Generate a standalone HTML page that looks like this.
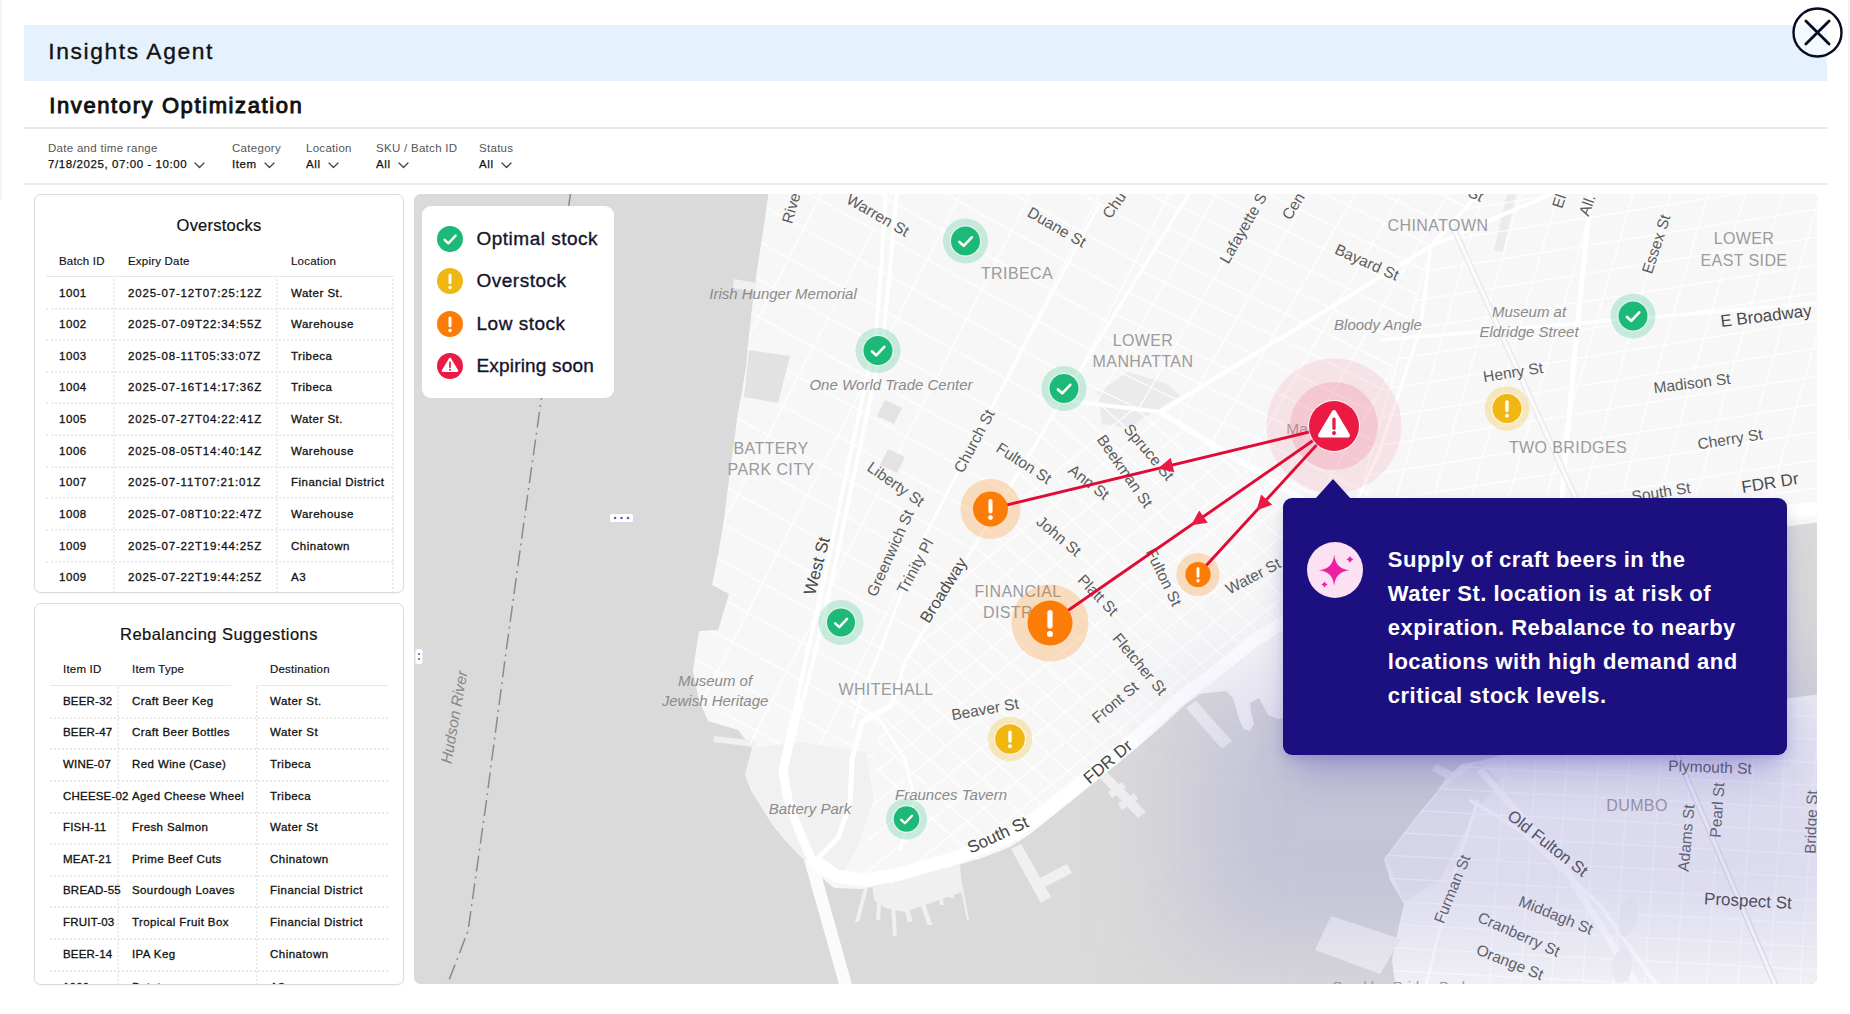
<!DOCTYPE html>
<html lang="en"><head><meta charset="utf-8"><title>Insights Agent - Inventory Optimization</title>
<style>
*{box-sizing:border-box;margin:0;padding:0}
html,body{width:1850px;height:1014px;overflow:hidden;background:#fff}
body{position:relative;font-family:"Liberation Sans","DejaVu Sans",sans-serif;color:#111}
.abs{position:absolute}
.band{left:24px;top:25px;width:1803px;height:55.8px;background:#e5f2fe}
.h1{left:48.3px;top:35.8px;font-size:22.8px;line-height:30px;color:#111;white-space:nowrap;letter-spacing:1.6px;-webkit-text-stroke:.35px #111}
.h2{left:49.3px;top:90.5px;font-size:22px;line-height:30px;color:#111;white-space:nowrap;font-weight:normal;letter-spacing:1.6px;-webkit-text-stroke:.95px #111}
.hr{left:24px;width:1803px;height:2px;background:#e4e8ee}
.flt{top:141px;white-space:nowrap}
.flt .l{font-size:11.5px;line-height:14px;color:#555;letter-spacing:.29px}
.flt .v{font-size:11.5px;line-height:14px;color:#111;margin-top:2px;-webkit-text-stroke:.25px #111;letter-spacing:.58px}
.flt svg{vertical-align:-1px;margin-left:7px}
.card{left:34px;width:370px;border:1.5px solid #dcdcdc;border-radius:7px;background:#fff;overflow:hidden;box-shadow:0 1px 2px rgba(0,0,0,.05)}
.card .t{position:absolute;left:0;width:100%;text-align:center;font-size:16.5px;line-height:20px;color:#111;-webkit-text-stroke:.2px #111}
.card .c{position:absolute;font-size:11.5px;line-height:14px;white-space:nowrap;color:#111;-webkit-text-stroke:.3px #111}
.card .hd{-webkit-text-stroke:.15px #111;letter-spacing:.2px}
.k1{letter-spacing:.55px}.k2{letter-spacing:.82px}.k3{letter-spacing:.5px}.j1{letter-spacing:.2px}.j2{letter-spacing:.4px}.j3{letter-spacing:.47px}
.card .hl{position:absolute;height:1.6px;background:#e6e9ec}
.card .rl{position:absolute;height:0;border-top:2px dotted #ebebeb}
.card .vl{position:absolute;width:0;border-left:2px dotted #ebebeb}
.map{left:414px;top:194px;width:1403px;height:790px;border-radius:7px;overflow:hidden;background:#d9d9d9}
.legend{left:422px;top:206px;width:192px;height:192px;background:#fff;border-radius:9px}
.legend .i{position:absolute;left:15px;width:26px;height:26px}
.legend .x{position:absolute;left:54.5px;font-size:19px;line-height:24px;color:#14142b;white-space:nowrap;-webkit-text-stroke:.35px #14142b;letter-spacing:.5px}
.tip{left:1283px;top:498px;width:504px;height:257px;background:#1c1080;border-radius:9px}
.tipsh{position:absolute;left:869px;top:304px;width:504px;height:257px;border-radius:9px;box-shadow:0 26px 40px -12px rgba(70,60,180,.30),0 6px 14px -2px rgba(50,40,150,.22)}
.tint{position:absolute;left:776px;top:486px;width:700px;height:270px;background:rgba(118,112,206,.21);filter:blur(52px)}
.tiparrow{left:1315px;top:479px;width:0;height:0;border-left:18px solid transparent;border-right:18px solid transparent;border-bottom:20px solid #1c1080}
.tip .ic{position:absolute;left:24.2px;top:43.5px;width:56px;height:56px;border-radius:50%;background:#fbe1f1}
.tip .tx{position:absolute;left:104.8px;top:44.5px;font-size:22px;line-height:34px;font-weight:bold;color:#fff;white-space:nowrap;letter-spacing:.5px}
.close{left:1792.3px;top:7px;width:51px;height:51px}
</style></head><body>
<div class="abs" style="left:1848.3px;top:0;width:1.7px;height:440px;background:#f3f3f3"></div>
<div class="abs" style="left:0;top:0;width:2px;height:200px;background:#f3f3f3"></div>
<div class="abs band"></div>
<div class="abs h1">Insights Agent</div>
<div class="abs h2">Inventory Optimization</div>
<div class="abs hr" style="top:126.5px"></div>
<div class="abs flt" style="left:48px"><div class="l">Date and time range</div><div class="v">7/18/2025, 07:00 - 10:00<svg width="11" height="7" viewBox="0 0 11 7"><path d="M1 1l4.5 4.5L10 1" fill="none" stroke="#444" stroke-width="1.3" stroke-linecap="round" stroke-linejoin="round"/></svg></div></div>
<div class="abs flt" style="left:232px"><div class="l">Category</div><div class="v">Item<svg width="11" height="7" viewBox="0 0 11 7"><path d="M1 1l4.5 4.5L10 1" fill="none" stroke="#444" stroke-width="1.3" stroke-linecap="round" stroke-linejoin="round"/></svg></div></div>
<div class="abs flt" style="left:306px"><div class="l">Location</div><div class="v">All<svg width="11" height="7" viewBox="0 0 11 7"><path d="M1 1l4.5 4.5L10 1" fill="none" stroke="#444" stroke-width="1.3" stroke-linecap="round" stroke-linejoin="round"/></svg></div></div>
<div class="abs flt" style="left:376px"><div class="l">SKU / Batch ID</div><div class="v">All<svg width="11" height="7" viewBox="0 0 11 7"><path d="M1 1l4.5 4.5L10 1" fill="none" stroke="#444" stroke-width="1.3" stroke-linecap="round" stroke-linejoin="round"/></svg></div></div>
<div class="abs flt" style="left:479px"><div class="l">Status</div><div class="v">All<svg width="11" height="7" viewBox="0 0 11 7"><path d="M1 1l4.5 4.5L10 1" fill="none" stroke="#444" stroke-width="1.3" stroke-linecap="round" stroke-linejoin="round"/></svg></div></div>
<div class="abs hr" style="top:182.5px;background:#e9ebee"></div>
<div class="abs card" style="top:194px;height:399px">
<div class="t" style="top:20px;letter-spacing:.23px">Overstocks</div>
<div class="c hd" style="left:24px;top:58.6px">Batch ID</div>
<div class="c hd" style="left:93px;top:58.6px">Expiry Date</div>
<div class="c hd" style="left:256px;top:58.6px">Location</div>
<div class="hl" style="left:10.5px;width:347px;top:80.8px"></div>
<div class="vl" style="left:77.7px;top:84px;height:330px"></div>
<div class="vl" style="left:241px;top:84px;height:330px"></div>
<div class="vl" style="left:356.5px;top:84px;height:330px"></div>
<div class="c k1" style="left:24px;top:90.5px">1001</div>
<div class="c k2" style="left:93px;top:90.5px">2025-07-12T07:25:12Z</div>
<div class="c k3" style="left:256px;top:90.5px">Water St.</div>
<div class="rl" style="left:10.5px;width:347px;top:112.5px"></div>
<div class="c k1" style="left:24px;top:122.1px">1002</div>
<div class="c k2" style="left:93px;top:122.1px">2025-07-09T22:34:55Z</div>
<div class="c k3" style="left:256px;top:122.1px">Warehouse</div>
<div class="rl" style="left:10.5px;width:347px;top:144.1px"></div>
<div class="c k1" style="left:24px;top:153.8px">1003</div>
<div class="c k2" style="left:93px;top:153.8px">2025-08-11T05:33:07Z</div>
<div class="c k3" style="left:256px;top:153.8px">Tribeca</div>
<div class="rl" style="left:10.5px;width:347px;top:175.8px"></div>
<div class="c k1" style="left:24px;top:185.4px">1004</div>
<div class="c k2" style="left:93px;top:185.4px">2025-07-16T14:17:36Z</div>
<div class="c k3" style="left:256px;top:185.4px">Tribeca</div>
<div class="rl" style="left:10.5px;width:347px;top:207.4px"></div>
<div class="c k1" style="left:24px;top:217.1px">1005</div>
<div class="c k2" style="left:93px;top:217.1px">2025-07-27T04:22:41Z</div>
<div class="c k3" style="left:256px;top:217.1px">Water St.</div>
<div class="rl" style="left:10.5px;width:347px;top:239.1px"></div>
<div class="c k1" style="left:24px;top:248.8px">1006</div>
<div class="c k2" style="left:93px;top:248.8px">2025-08-05T14:40:14Z</div>
<div class="c k3" style="left:256px;top:248.8px">Warehouse</div>
<div class="rl" style="left:10.5px;width:347px;top:270.8px"></div>
<div class="c k1" style="left:24px;top:280.4px">1007</div>
<div class="c k2" style="left:93px;top:280.4px">2025-07-11T07:21:01Z</div>
<div class="c k3" style="left:256px;top:280.4px">Financial District</div>
<div class="rl" style="left:10.5px;width:347px;top:302.4px"></div>
<div class="c k1" style="left:24px;top:312.0px">1008</div>
<div class="c k2" style="left:93px;top:312.0px">2025-07-08T10:22:47Z</div>
<div class="c k3" style="left:256px;top:312.0px">Warehouse</div>
<div class="rl" style="left:10.5px;width:347px;top:334.0px"></div>
<div class="c k1" style="left:24px;top:343.7px">1009</div>
<div class="c k2" style="left:93px;top:343.7px">2025-07-22T19:44:25Z</div>
<div class="c k3" style="left:256px;top:343.7px">Chinatown</div>
<div class="rl" style="left:10.5px;width:347px;top:365.7px"></div>
<div class="c k1" style="left:24px;top:375.3px">1009</div>
<div class="c k2" style="left:93px;top:375.3px">2025-07-22T19:44:25Z</div>
<div class="c k3" style="left:256px;top:375.3px">A3</div>
</div>
<div class="abs card" style="top:603px;height:382px">
<div class="t" style="top:20px;letter-spacing:.47px">Rebalancing Suggestions</div>
<div class="c hd" style="left:28px;top:58.2px">Item ID</div>
<div class="c hd" style="left:97px;top:58.2px">Item Type</div>
<div class="c hd" style="left:235px;top:58.2px">Destination</div>
<div class="hl" style="left:14.5px;width:181px;top:80.6px"></div>
<div class="hl" style="left:220.5px;width:132px;top:80.6px"></div>
<div class="vl" style="left:82.1px;top:83px;height:330px"></div>
<div class="vl" style="left:220.7px;top:83px;height:330px"></div>
<div class="c j1" style="left:28px;top:89.5px">BEER-32</div>
<div class="c j2" style="left:97px;top:89.5px">Craft Beer Keg</div>
<div class="c j3" style="left:235px;top:89.5px">Water St.</div>
<div class="rl" style="left:14.5px;width:338px;top:112.5px"></div>
<div class="c j1" style="left:28px;top:121.1px">BEER-47</div>
<div class="c j2" style="left:97px;top:121.1px">Craft Beer Bottles</div>
<div class="c j3" style="left:235px;top:121.1px">Water St</div>
<div class="rl" style="left:14.5px;width:338px;top:144.1px"></div>
<div class="c j1" style="left:28px;top:152.8px">WINE-07</div>
<div class="c j2" style="left:97px;top:152.8px">Red Wine (Case)</div>
<div class="c j3" style="left:235px;top:152.8px">Tribeca</div>
<div class="rl" style="left:14.5px;width:338px;top:175.8px"></div>
<div class="c j1" style="left:28px;top:184.5px">CHEESE-02</div>
<div class="c j2" style="left:97px;top:184.5px">Aged Cheese Wheel</div>
<div class="c j3" style="left:235px;top:184.5px">Tribeca</div>
<div class="rl" style="left:14.5px;width:338px;top:207.5px"></div>
<div class="c j1" style="left:28px;top:216.1px">FISH-11</div>
<div class="c j2" style="left:97px;top:216.1px">Fresh Salmon</div>
<div class="c j3" style="left:235px;top:216.1px">Water St</div>
<div class="rl" style="left:14.5px;width:338px;top:239.1px"></div>
<div class="c j1" style="left:28px;top:247.8px">MEAT-21</div>
<div class="c j2" style="left:97px;top:247.8px">Prime Beef Cuts</div>
<div class="c j3" style="left:235px;top:247.8px">Chinatown</div>
<div class="rl" style="left:14.5px;width:338px;top:270.8px"></div>
<div class="c j1" style="left:28px;top:279.4px">BREAD-55</div>
<div class="c j2" style="left:97px;top:279.4px">Sourdough Loaves</div>
<div class="c j3" style="left:235px;top:279.4px">Financial District</div>
<div class="rl" style="left:14.5px;width:338px;top:302.4px"></div>
<div class="c j1" style="left:28px;top:311.0px">FRUIT-03</div>
<div class="c j2" style="left:97px;top:311.0px">Tropical Fruit Box</div>
<div class="c j3" style="left:235px;top:311.0px">Financial District</div>
<div class="rl" style="left:14.5px;width:338px;top:334.0px"></div>
<div class="c j1" style="left:28px;top:342.7px">BEER-14</div>
<div class="c j2" style="left:97px;top:342.7px">IPA Keg</div>
<div class="c j3" style="left:235px;top:342.7px">Chinatown</div>
<div class="rl" style="left:14.5px;width:338px;top:365.7px"></div>
<div class="c j1" style="left:28px;top:375.8px">1009</div>
<div class="c j2" style="left:97px;top:375.8px">Potatoes</div>
<div class="c j3" style="left:235px;top:375.8px">A3</div>
<div class="rl" style="left:14.5px;width:338px;top:397.3px"></div>
</div>
<div class="abs map">
<svg width="1403" height="790" viewBox="414 194 1403 790" font-family="'Liberation Sans','DejaVu Sans',sans-serif" style="display:block">
<defs>
<clipPath id="cm"><polygon points="769,190 764,225 757,270 752,308 748,345 746,367 742,392 738,412 733,450 729,479 724,520 718,555 712,585 729,594 718,630 699,631 696,650 693,671 699,700 708,721 738,730 752,748 745,775 752,792 762,808 772,824 784,839 797,853 811,866 822,878 834,888 861,889 900,882 955,866 985,857 1010,847 1030,834 1049,819 1074,799 1090,786 1115,766 1139,746 1163,725 1186,704 1207,689 1232,668 1257,648 1284,630 1400,590 1500,565 1650,540 1790,526 1820,522 1820,190"/></clipPath>
<clipPath id="cb"><polygon points="1820,694 1790,698 1700,715 1600,735 1520,750 1480,761 1462,764 1453,772 1445,780 1439,789 1420,812 1400,838 1384,859 1390,880 1404,904 1398,930 1392,960 1396,990 1820,990"/></clipPath>
<clipPath id="rA"><polygon points="600,190 1193,190 1062,400 905,662 880,720 860,900 600,900"/></clipPath>
<clipPath id="rB"><polygon points="1062,400 1160,412 1300,500 1420,600 1300,700 1000,900 860,900 880,720 905,662"/></clipPath>
<clipPath id="rC"><polygon points="1193,190 1478,190 1431,246 1360,470 1420,600 1300,500 1160,412 1062,400"/></clipPath>
<clipPath id="rD"><polygon points="1478,190 1820,190 1820,640 1420,600 1360,470 1431,246"/></clipPath>
</defs>
<rect x="414" y="194" width="1403" height="790" fill="#dadada"/>
<polygon points="769,190 764,225 757,270 752,308 748,345 746,367 742,392 738,412 733,450 729,479 724,520 718,555 712,585 729,594 718,630 699,631 696,650 693,671 699,700 708,721 738,730 752,748 745,775 752,792 762,808 772,824 784,839 797,853 811,866 822,878 834,888 861,889 900,882 955,866 985,857 1010,847 1030,834 1049,819 1074,799 1090,786 1115,766 1139,746 1163,725 1186,704 1207,689 1232,668 1257,648 1284,630 1400,590 1500,565 1650,540 1790,526 1820,522 1820,190" fill="#f7f7f7"/>
<polygon points="1820,694 1790,698 1700,715 1600,735 1520,750 1480,761 1462,764 1453,772 1445,780 1439,789 1420,812 1400,838 1384,859 1390,880 1404,904 1398,930 1392,960 1396,990 1820,990" fill="#f7f7f7"/>
<path d="M734 279L757 283L755 292L733 288ZM714 736L756 741L755 747L713 742ZM864.0 888L868.0 888L859.0 922L855.0 922ZM878.0 890L882.0 890L880.0 920L876.0 920ZM891.0 905L895.0 905L897.0 936L893.0 936ZM902.5 900L907.5 900L912.5 922L907.5 922ZM915.5 890L920.5 890L932.5 925L927.5 925ZM936.0 880L940.0 880L944.0 905L940.0 905ZM948.0 872L952.0 872L954.0 898L950.0 898ZM957.0 868L959.0 868L969.0 920L967.0 920ZM872 884L960 864L962 892L925 905L905 912L885 908L874 900ZM1011 849L1021 844L1051 897L1041 903ZM1036 880L1067 864L1072 873L1041 889ZM1098 776L1106 771L1146 812L1138 818ZM1108 792L1122 782L1126 788L1112 798ZM1118 804L1134 793L1138 799L1122 810ZM1186 708L1196 701L1232 741L1222 749ZM1331 916L1401 939L1380 974L1315 950ZM1453 772L1436 764L1432 770L1448 780Z" fill="#f0f0f0"/>
<path d="M804 860L816 856L853 988L840 988Z" fill="#fbfbfb"/>
<path d="M1198 694L1226 691L1233 698L1237 712L1240 722L1244 729L1250 731L1254 724L1251 712L1250 703L1259 698L1264 707L1268 715L1278 719L1292 716L1292 624L1257 648L1232 668L1207 689Z" fill="#f6f6f6"/>
<path d="M1098 392L1128 372L1168 384L1180 396L1128 428L1102 424ZM1508 190L1517 190L1503 252L1494 250Z" fill="#ebebeb"/>
<path d="M1478 762L1440 790L1386 858L1404 902L1440 880L1470 820L1500 780Z" fill="#efefef"/>
<g clip-path="url(#cm)">
<g clip-path="url(#rA)">
<path d="M-303.4 -686.9L2495.4 864.5M-319.4 -658.0L2479.4 893.4M-335.4 -629.1L2463.4 922.2M-351.4 -600.3L2447.4 951.1M-367.4 -571.4L2431.4 980.0M-383.4 -542.6L2415.4 1008.8M-399.4 -513.7L2399.4 1037.7M-415.4 -484.8L2383.4 1066.6M-431.4 -456.0L2367.4 1095.4M-447.4 -427.1L2351.4 1124.3M-463.4 -398.2L2335.4 1153.1M-479.4 -369.4L2319.4 1182.0M-495.4 -340.5L2303.4 1210.9M-511.4 -311.7L2287.4 1239.7M-527.4 -282.8L2271.4 1268.6M-543.4 -253.9L2255.4 1297.5M-559.4 -225.1L2239.4 1326.3M-575.4 -196.2L2223.4 1355.2M-591.4 -167.3L2207.4 1384.0M-607.4 -138.5L2191.4 1412.9M-623.4 -109.6L2175.4 1441.8M-639.4 -80.8L2159.4 1470.6M-655.4 -51.9L2143.4 1499.5" stroke="#ffffff" stroke-width="1.5" fill="none" stroke-opacity=".8"/>
<path d="M26.6 1754.0L1479.4 -1097.2M81.9 1782.2L1534.7 -1069.1M137.1 1810.3L1589.9 -1040.9M192.4 1838.5L1645.1 -1012.8M247.6 1866.6L1700.4 -984.6M302.9 1894.8L1755.6 -956.5M358.1 1922.9L1810.9 -928.3" stroke="#ffffff" stroke-width="1.5" fill="none" stroke-opacity=".8"/>
</g>
<g clip-path="url(#rB)">
<path d="M-4.6 -675.1L2373.5 1466.2M-18.6 -659.5L2359.4 1481.8M-32.7 -643.9L2345.4 1497.4M-46.7 -628.2L2331.3 1513.0M-60.8 -612.6L2317.3 1528.6M-74.8 -597.0L2303.2 1544.2M-88.9 -581.4L2289.2 1559.8M-102.9 -565.8L2275.1 1575.4M-117.0 -550.2L2261.1 1591.0M-131.0 -534.6L2247.0 1606.6M-145.1 -519.0L2233.0 1622.2M-159.1 -503.4L2218.9 1637.8M-173.2 -487.8L2204.9 1653.4M-187.2 -472.2L2190.8 1669.0M-201.3 -456.6L2176.8 1684.6M-215.3 -441.0L2162.7 1700.2M-229.4 -425.4L2148.7 1715.9M-243.4 -409.8L2134.6 1731.5M-257.5 -394.2L2120.6 1747.1M-271.5 -378.5L2106.5 1762.7M-285.6 -362.9L2092.5 1778.3M-299.7 -347.3L2078.4 1793.9M-313.7 -331.7L2064.4 1809.5M-327.8 -316.1L2050.3 1825.1" stroke="#ffffff" stroke-width="1.5" fill="none" stroke-opacity=".8"/>
<path d="M-264.4 1541.0L2222.5 -472.8M-249.3 1559.7L2237.6 -454.1M-234.2 1578.4L2252.7 -435.5M-219.1 1597.0L2267.8 -416.8M-204.0 1615.7L2282.9 -398.2M-188.8 1634.3L2298.0 -379.5M-173.7 1653.0L2313.1 -360.9M-158.6 1671.6L2328.2 -342.2M-143.5 1690.3L2343.3 -323.6M-128.4 1708.9L2358.4 -304.9M-113.3 1727.6L2373.5 -286.3M-98.2 1746.2L2388.6 -267.6M-83.1 1764.9L2403.7 -249.0M-68.0 1783.5L2418.8 -230.3M-52.9 1802.2L2434.0 -211.7" stroke="#ffffff" stroke-width="1.5" fill="none" stroke-opacity=".8"/>
</g>
<g clip-path="url(#rC)">
<path d="M16.6 -611.2L2892.7 791.6M5.6 -588.7L2881.8 814.1M-5.3 -566.2L2870.8 836.6M-16.3 -543.7L2859.9 859.0M-27.2 -521.3L2848.9 881.5M-38.2 -498.8L2837.9 904.0M-49.2 -476.3L2827.0 926.5M-60.1 -453.9L2816.0 948.9M-71.1 -431.4L2805.1 971.4M-82.0 -408.9L2794.1 993.9M-93.0 -386.5L2783.2 1016.3M-103.9 -364.0L2772.2 1038.8M-114.9 -341.5L2761.2 1061.3M-125.9 -319.0L2750.3 1083.7M-136.8 -296.6L2739.3 1106.2M-147.8 -274.1L2728.4 1128.7M-158.7 -251.6L2717.4 1151.2M-169.7 -229.2L2706.4 1173.6M-180.7 -206.7L2695.5 1196.1M-191.6 -184.2L2684.5 1218.6M-202.6 -161.8L2673.6 1241.0M-213.5 -139.3L2662.6 1263.5M-224.5 -116.8L2651.6 1286.0" stroke="#ffffff" stroke-width="1.5" fill="none" stroke-opacity=".8"/>
<path d="M339.1 1553.6L1939.1 -1217.6M373.7 1573.6L1973.7 -1197.6M408.4 1593.6L2008.4 -1177.6M443.0 1613.6L2043.0 -1157.6M477.6 1633.6L2077.6 -1137.6M512.3 1653.6L2112.3 -1117.6M546.9 1673.6L2146.9 -1097.6M581.6 1693.6L2181.6 -1077.6M616.2 1713.6L2216.2 -1057.6M650.8 1733.6L2250.8 -1037.6" stroke="#ffffff" stroke-width="1.5" fill="none" stroke-opacity=".8"/>
</g>
<g clip-path="url(#rD)">
<path d="M73.0 401.8L3233.6 -98.7M77.3 429.0L3237.9 -71.6M81.6 456.2L3242.2 -44.4M85.9 483.3L3246.5 -17.3M90.2 510.5L3250.8 9.9M94.5 537.6L3255.1 37.1M98.8 564.8L3259.4 64.2M103.1 592.0L3263.7 91.4M107.4 619.1L3268.0 118.5M111.7 646.3L3272.3 145.7M116.0 673.5L3276.6 172.9M120.3 700.6L3280.9 200.0M124.6 727.8L3285.2 227.2M128.9 754.9L3289.5 254.4M133.2 782.1L3293.8 281.5M137.5 809.3L3298.1 308.7" stroke="#ffffff" stroke-width="1.5" fill="none" stroke-opacity=".8"/>
<path d="M1007.3 1722.5L1889.4 -1353.6M1042.0 1732.4L1924.0 -1343.6M1076.6 1742.3L1958.6 -1333.7M1111.2 1752.2L1993.2 -1323.8M1145.8 1762.2L2027.8 -1313.9M1180.4 1772.1L2062.4 -1303.9M1215.0 1782.0L2097.0 -1294.0M1249.6 1791.9L2131.6 -1284.1M1284.2 1801.9L2166.2 -1274.2M1318.8 1811.8L2200.8 -1264.2M1353.4 1821.7L2235.4 -1254.3M1388.0 1831.6L2270.0 -1244.4" stroke="#ffffff" stroke-width="1.5" fill="none" stroke-opacity=".8"/>
</g>
<path d="M752 748L800 742L866 752L874 800L858 846L838 882L812 866L784 839L762 808L745 775Z" fill="#f1f1f1"/>
<g fill="none" stroke="#fff" stroke-linejoin="round">
<path d="M897 190L890 270L884 331L870 400L851 489L832 580L816 650L803 700" stroke-width="4"/>
<path d="M886 190L881 270L876 331L862 400L843 489L824 580L808 650L797 700" stroke-width="4"/>
<path d="M800 700L790 740L783 770L788 800L798 828L811 858L846 990" stroke-width="9"/>
<path d="M1191 190L1062 400L905 662L892 705" stroke-width="3.2"/>
<path d="M1099 205L974 441L920 545L884 640L860 700L852 728" stroke-width="2.6"/>
<path d="M892 705L862 722L852 760L850 804L838 838L818 858" stroke-width="5"/>
<path d="M1062 400L1160 412L1431 246L1482 190" stroke-width="4"/>
<path d="M1431 246L1560 190" stroke-width="4"/>
<path d="M1160 412L1290 492L1420 560" stroke-width="5.5"/>
<path d="M1431 246L1420 330L1380 450L1330 560" stroke-width="3.5"/>
<path d="M1591 190L1577 330L1562 496L1556 560" stroke-width="5"/>
<path d="M1380 340L1817 303" stroke-width="3.5"/>
<path d="M814 860L836 876L866 880L900 874L955 858L1008 838L1046 810L1088 777L1137 737L1184 695L1205 680L1255 640L1284 622L1400 580L1500 552L1650 527L1817 508" stroke-width="13"/>
<path d="M850 700L880 720L905 760L915 800L900 850" stroke-width="3"/>
</g>
<path d="M1452 225L1600 552" stroke="#e9e9e9" stroke-width="6" fill="none"/><path d="M1452 225L1600 552" stroke="#fbfbfb" stroke-width="3.4" fill="none"/>
</g>
<g clip-path="url(#cb)">
<g clip-path="url(#bk1)">
</g>
<path d="M117.0 604.4L3312.6 771.9M115.8 627.4L3311.4 794.8M114.6 650.3L3310.2 817.8M113.4 673.3L3309.0 840.8M112.2 696.3L3307.8 863.7M111.0 719.2L3306.6 886.7M109.8 742.2L3305.4 909.7M108.6 765.2L3304.2 932.6M107.4 788.1L3303.0 955.6M106.2 811.1L3301.8 978.6M105.0 834.1L3300.6 1001.5M103.8 857.0L3299.4 1024.5M102.6 880.0L3298.2 1047.5M101.4 903.0L3297.0 1070.5M100.2 925.9L3295.8 1093.4" stroke="#ffffff" stroke-width="1.5" fill="none" stroke-opacity=".8"/>
<path d="M1388.8 2421.1L1612.1 -771.1M1419.8 2423.3L1643.0 -768.9M1450.7 2425.5L1673.9 -766.8M1481.6 2427.6L1704.8 -764.6M1512.5 2429.8L1735.8 -762.4M1543.5 2431.9L1766.7 -760.3M1574.4 2434.1L1797.6 -758.1M1605.3 2436.3L1828.5 -755.9M1636.2 2438.4L1859.5 -753.8M1667.2 2440.6L1890.4 -751.6M1698.1 2442.8L1921.3 -749.5M1729.0 2444.9L1952.2 -747.3" stroke="#ffffff" stroke-width="1.5" fill="none" stroke-opacity=".8"/>
<g fill="none" stroke="#fff"><path d="M1480 770L1560 860L1640 990" stroke-width="7"/><path d="M1470 800L1520 830L1600 905L1660 990" stroke-width="4"/><path d="M1660 715L1780 996" stroke="#e2e2ea" stroke-width="6"/><path d="M1660 715L1780 996" stroke-width="3.4"/><path d="M1425 990L1452 880L1478 800" stroke-width="3"/></g>
</g>
<ellipse cx="1628" cy="917" rx="9" ry="20" fill="#f2f2f4" transform="rotate(12 1628 917)"/><ellipse cx="1622" cy="966" rx="10" ry="17" fill="#f2f2f4" transform="rotate(8 1622 966)"/>
<path d="M749 350L790 356L778 403L744 397Z" fill="#e2e2e2"/>
<path d="M885 400L902 408L894 424L877 416Z M888 449L905 457L897 473L880 465Z" fill="#e3e3e3"/>
<path d="M571 190L541 401L527 500L506 652L486 804L468 931L446 988" fill="none" stroke="#8a8a8a" stroke-width="1.5" stroke-dasharray="16 5 2 5"/>
<g>
<text x="791" y="208" font-size="15.5" fill="#5c5c5c" text-anchor="middle" dominant-baseline="central" font-weight="normal" transform="rotate(-74 791 208)">Rive</text>
<text x="878" y="215" font-size="15.5" fill="#5c5c5c" text-anchor="middle" dominant-baseline="central" font-weight="normal" transform="rotate(30 878 215)">Warren St</text>
<text x="1057" y="227" font-size="15.5" fill="#5c5c5c" text-anchor="middle" dominant-baseline="central" font-weight="normal" transform="rotate(30 1057 227)">Duane St</text>
<text x="1114" y="205" font-size="15.5" fill="#5c5c5c" text-anchor="middle" dominant-baseline="central" font-weight="normal" transform="rotate(-55 1114 205)">Chu</text>
<text x="1243" y="228" font-size="15.5" fill="#5c5c5c" text-anchor="middle" dominant-baseline="central" font-weight="normal" transform="rotate(-60 1243 228)">Lafayette S</text>
<text x="1293" y="206" font-size="15.5" fill="#5c5c5c" text-anchor="middle" dominant-baseline="central" font-weight="normal" transform="rotate(-58 1293 206)">Cen</text>
<text x="1559" y="201" font-size="15.5" fill="#5c5c5c" text-anchor="middle" dominant-baseline="central" font-weight="normal" transform="rotate(-72 1559 201)">El</text>
<text x="1587" y="205" font-size="15.5" fill="#5c5c5c" text-anchor="middle" dominant-baseline="central" font-weight="normal" transform="rotate(-70 1587 205)">All.</text>
<text x="1656" y="244" font-size="15.5" fill="#5c5c5c" text-anchor="middle" dominant-baseline="central" font-weight="normal" transform="rotate(-72 1656 244)">Essex St</text>
<text x="1476" y="194" font-size="15.5" fill="#5c5c5c" text-anchor="middle" dominant-baseline="central" font-weight="normal" transform="rotate(25 1476 194)">St</text>
<text x="1367" y="262" font-size="15.5" fill="#5c5c5c" text-anchor="middle" dominant-baseline="central" font-weight="normal" transform="rotate(24 1367 262)">Bayard St</text>
<text x="1766" y="316" font-size="17" fill="#4a4a4a" text-anchor="middle" dominant-baseline="central" font-weight="normal" transform="rotate(-7 1766 316)">E Broadway</text>
<text x="1513" y="372" font-size="15.5" fill="#5c5c5c" text-anchor="middle" dominant-baseline="central" font-weight="normal" transform="rotate(-9 1513 372)">Henry St</text>
<text x="1692" y="383" font-size="15.5" fill="#5c5c5c" text-anchor="middle" dominant-baseline="central" font-weight="normal" transform="rotate(-7 1692 383)">Madison St</text>
<text x="1730" y="439" font-size="15.5" fill="#5c5c5c" text-anchor="middle" dominant-baseline="central" font-weight="normal" transform="rotate(-9 1730 439)">Cherry St</text>
<text x="1770" y="483" font-size="17" fill="#4a4a4a" text-anchor="middle" dominant-baseline="central" font-weight="normal" transform="rotate(-9 1770 483)">FDR Dr</text>
<text x="1661" y="492" font-size="15.5" fill="#5c5c5c" text-anchor="middle" dominant-baseline="central" font-weight="normal" transform="rotate(-9 1661 492)">South St</text>
<text x="974" y="441" font-size="15.5" fill="#5c5c5c" text-anchor="middle" dominant-baseline="central" font-weight="normal" transform="rotate(-62 974 441)">Church St</text>
<text x="1024" y="463" font-size="15.5" fill="#5c5c5c" text-anchor="middle" dominant-baseline="central" font-weight="normal" transform="rotate(33 1024 463)">Fulton St</text>
<text x="1089" y="482" font-size="15.5" fill="#5c5c5c" text-anchor="middle" dominant-baseline="central" font-weight="normal" transform="rotate(38 1089 482)">Ann St</text>
<text x="1125" y="471" font-size="15.5" fill="#5c5c5c" text-anchor="middle" dominant-baseline="central" font-weight="normal" transform="rotate(55 1125 471)">Beekman St</text>
<text x="1149" y="452" font-size="15.5" fill="#5c5c5c" text-anchor="middle" dominant-baseline="central" font-weight="normal" transform="rotate(50 1149 452)">Spruce St</text>
<text x="896" y="484" font-size="15.5" fill="#5c5c5c" text-anchor="middle" dominant-baseline="central" font-weight="normal" transform="rotate(35 896 484)">Liberty St</text>
<text x="1059" y="536" font-size="15.5" fill="#5c5c5c" text-anchor="middle" dominant-baseline="central" font-weight="normal" transform="rotate(40 1059 536)">John St</text>
<text x="817" y="566" font-size="17" fill="#444" text-anchor="middle" dominant-baseline="central" font-weight="normal" transform="rotate(-75 817 566)">West St</text>
<text x="890" y="553" font-size="15.5" fill="#5c5c5c" text-anchor="middle" dominant-baseline="central" font-weight="normal" transform="rotate(-66 890 553)">Greenwich St</text>
<text x="915" y="566" font-size="15.5" fill="#5c5c5c" text-anchor="middle" dominant-baseline="central" font-weight="normal" transform="rotate(-62 915 566)">Trinity Pl</text>
<text x="943" y="590" font-size="16.5" fill="#4a4a4a" text-anchor="middle" dominant-baseline="central" font-weight="normal" transform="rotate(-58 943 590)">Broadway</text>
<text x="1098" y="595" font-size="15.5" fill="#5c5c5c" text-anchor="middle" dominant-baseline="central" font-weight="normal" transform="rotate(46 1098 595)">Platt St</text>
<text x="1164" y="577" font-size="15.5" fill="#5c5c5c" text-anchor="middle" dominant-baseline="central" font-weight="normal" transform="rotate(64 1164 577)">Fulton St</text>
<text x="1253" y="576" font-size="15.5" fill="#5c5c5c" text-anchor="middle" dominant-baseline="central" font-weight="normal" transform="rotate(-28 1253 576)">Water St</text>
<text x="1140" y="664" font-size="15.5" fill="#5c5c5c" text-anchor="middle" dominant-baseline="central" font-weight="normal" transform="rotate(50 1140 664)">Fletcher St</text>
<text x="1115" y="702" font-size="15.5" fill="#5c5c5c" text-anchor="middle" dominant-baseline="central" font-weight="normal" transform="rotate(-40 1115 702)">Front St</text>
<text x="985" y="709" font-size="15.5" fill="#5c5c5c" text-anchor="middle" dominant-baseline="central" font-weight="normal" transform="rotate(-10 985 709)">Beaver St</text>
<text x="1108" y="762" font-size="17" fill="#444" text-anchor="middle" dominant-baseline="central" font-weight="normal" transform="rotate(-40 1108 762)">FDR Dr</text>
<text x="998" y="835" font-size="17" fill="#444" text-anchor="middle" dominant-baseline="central" font-weight="normal" transform="rotate(-25 998 835)">South St</text>
<text x="1710" y="767" font-size="15.5" fill="#5c5c5c" text-anchor="middle" dominant-baseline="central" font-weight="normal" transform="rotate(2 1710 767)">Plymouth St</text>
<text x="1548" y="843" font-size="16.5" fill="#4a4a4a" text-anchor="middle" dominant-baseline="central" font-weight="normal" transform="rotate(38 1548 843)">Old Fulton St</text>
<text x="1452" y="889" font-size="15.5" fill="#5c5c5c" text-anchor="middle" dominant-baseline="central" font-weight="normal" transform="rotate(-68 1452 889)">Furman St</text>
<text x="1686" y="838" font-size="15.5" fill="#5c5c5c" text-anchor="middle" dominant-baseline="central" font-weight="normal" transform="rotate(-85 1686 838)">Adams St</text>
<text x="1717" y="810" font-size="15.5" fill="#5c5c5c" text-anchor="middle" dominant-baseline="central" font-weight="normal" transform="rotate(-86 1717 810)">Pearl St</text>
<text x="1811" y="822" font-size="15.5" fill="#5c5c5c" text-anchor="middle" dominant-baseline="central" font-weight="normal" transform="rotate(-88 1811 822)">Bridge St</text>
<text x="1748" y="901" font-size="17" fill="#4a4a4a" text-anchor="middle" dominant-baseline="central" font-weight="normal" transform="rotate(3 1748 901)">Prospect St</text>
<text x="1556" y="915" font-size="15.5" fill="#5c5c5c" text-anchor="middle" dominant-baseline="central" font-weight="normal" transform="rotate(22 1556 915)">Middagh St</text>
<text x="1519" y="934" font-size="15.5" fill="#5c5c5c" text-anchor="middle" dominant-baseline="central" font-weight="normal" transform="rotate(24 1519 934)">Cranberry St</text>
<text x="1510" y="962" font-size="15.5" fill="#5c5c5c" text-anchor="middle" dominant-baseline="central" font-weight="normal" transform="rotate(22 1510 962)">Orange St</text>
<text x="1297" y="428" font-size="15.5" fill="#aaa" text-anchor="middle" dominant-baseline="central" font-weight="normal">Ma</text>
<text x="1438" y="225" font-size="16" fill="#9b9b9b" text-anchor="middle" dominant-baseline="central" font-weight="normal" letter-spacing="0.4">CHINATOWN</text>
<text x="1744" y="238" font-size="16" fill="#9b9b9b" text-anchor="middle" dominant-baseline="central" font-weight="normal" letter-spacing="0.4">LOWER</text>
<text x="1744" y="260" font-size="16" fill="#9b9b9b" text-anchor="middle" dominant-baseline="central" font-weight="normal" letter-spacing="0.4">EAST SIDE</text>
<text x="1017" y="273" font-size="16" fill="#9b9b9b" text-anchor="middle" dominant-baseline="central" font-weight="normal" letter-spacing="0.4">TRIBECA</text>
<text x="1143" y="340" font-size="16" fill="#9b9b9b" text-anchor="middle" dominant-baseline="central" font-weight="normal" letter-spacing="0.4">LOWER</text>
<text x="1143" y="361" font-size="16" fill="#9b9b9b" text-anchor="middle" dominant-baseline="central" font-weight="normal" letter-spacing="0.4">MANHATTAN</text>
<text x="1568" y="447" font-size="16" fill="#9b9b9b" text-anchor="middle" dominant-baseline="central" font-weight="normal" letter-spacing="0.4">TWO BRIDGES</text>
<text x="771" y="448" font-size="16" fill="#9b9b9b" text-anchor="middle" dominant-baseline="central" font-weight="normal" letter-spacing="0.4">BATTERY</text>
<text x="771" y="469" font-size="16" fill="#9b9b9b" text-anchor="middle" dominant-baseline="central" font-weight="normal" letter-spacing="0.4">PARK CITY</text>
<text x="1018" y="591" font-size="16" fill="#9b9b9b" text-anchor="middle" dominant-baseline="central" font-weight="normal" letter-spacing="0.4">FINANCIAL</text>
<text x="1008" y="612" font-size="16" fill="#9b9b9b" text-anchor="middle" dominant-baseline="central" font-weight="normal" letter-spacing="0.4">DISTR</text>
<text x="886" y="689" font-size="16" fill="#9b9b9b" text-anchor="middle" dominant-baseline="central" font-weight="normal" letter-spacing="0.4">WHITEHALL</text>
<text x="1637" y="805" font-size="16" fill="#9b9b9b" text-anchor="middle" dominant-baseline="central" font-weight="normal" letter-spacing="0.4">DUMBO</text>
<text x="783" y="293" font-size="15" fill="#8a8a8a" text-anchor="middle" dominant-baseline="central" font-weight="normal" font-style="italic">Irish Hunger Memorial</text>
<text x="1378" y="324" font-size="15" fill="#8a8a8a" text-anchor="middle" dominant-baseline="central" font-weight="normal" font-style="italic">Bloody Angle</text>
<text x="1529" y="311" font-size="15" fill="#8a8a8a" text-anchor="middle" dominant-baseline="central" font-weight="normal" font-style="italic">Museum at</text>
<text x="1529" y="331" font-size="15" fill="#8a8a8a" text-anchor="middle" dominant-baseline="central" font-weight="normal" font-style="italic">Eldridge Street</text>
<text x="891" y="384" font-size="15" fill="#8a8a8a" text-anchor="middle" dominant-baseline="central" font-weight="normal" font-style="italic">One World Trade Center</text>
<text x="715" y="680" font-size="15" fill="#8a8a8a" text-anchor="middle" dominant-baseline="central" font-weight="normal" font-style="italic">Museum of</text>
<text x="715" y="700" font-size="15" fill="#8a8a8a" text-anchor="middle" dominant-baseline="central" font-weight="normal" font-style="italic">Jewish Heritage</text>
<text x="951" y="794" font-size="15" fill="#8a8a8a" text-anchor="middle" dominant-baseline="central" font-weight="normal" font-style="italic">Fraunces Tavern</text>
<text x="810" y="808" font-size="15" fill="#8a8a8a" text-anchor="middle" dominant-baseline="central" font-weight="normal" font-style="italic">Battery Park</text>
<text x="454" y="717" font-size="15.5" fill="#888" text-anchor="middle" dominant-baseline="central" font-weight="normal" font-style="italic" transform="rotate(-80 454 717)">Hudson River</text>
<text x="1400" y="987" font-size="14.5" fill="#999" text-anchor="middle" dominant-baseline="central" font-weight="normal" font-style="italic">Brooklyn Bridge Park</text>
</g>
<rect x="610" y="514" width="23" height="8" rx="2" fill="#fff"/><circle cx="615" cy="518" r="1.3" fill="#5561c9"/><circle cx="621.5" cy="518" r="1.3" fill="#5561c9"/><circle cx="628" cy="518" r="1.3" fill="#5561c9"/>
<rect x="415.5" y="649" width="7" height="15" rx="2" fill="#fff"/><circle cx="419" cy="654" r="1.1" fill="#5561c9"/><circle cx="419" cy="659" r="1.1" fill="#5561c9"/>
<g transform="translate(965.5 241)"><circle r="22.5" fill="#1db979" fill-opacity="0.23"/><circle r="15.7" fill="#fff" fill-opacity=".55"/><circle r="14.5" fill="#1db979"/><path d="M-6.02 0.89L-1.78 4.80L6.25 -3.68" fill="none" stroke="#fff" stroke-width="2.68" stroke-linecap="round" stroke-linejoin="round"/></g>
<g transform="translate(878 350.5)"><circle r="22.5" fill="#1db979" fill-opacity="0.23"/><circle r="15.7" fill="#fff" fill-opacity=".55"/><circle r="14.5" fill="#1db979"/><path d="M-6.02 0.89L-1.78 4.80L6.25 -3.68" fill="none" stroke="#fff" stroke-width="2.68" stroke-linecap="round" stroke-linejoin="round"/></g>
<g transform="translate(1064 388.5)"><circle r="22.5" fill="#1db979" fill-opacity="0.23"/><circle r="15.7" fill="#fff" fill-opacity=".55"/><circle r="14.5" fill="#1db979"/><path d="M-6.02 0.89L-1.78 4.80L6.25 -3.68" fill="none" stroke="#fff" stroke-width="2.68" stroke-linecap="round" stroke-linejoin="round"/></g>
<g transform="translate(1633 316)"><circle r="22.5" fill="#1db979" fill-opacity="0.23"/><circle r="15.7" fill="#fff" fill-opacity=".55"/><circle r="14.5" fill="#1db979"/><path d="M-6.02 0.89L-1.78 4.80L6.25 -3.68" fill="none" stroke="#fff" stroke-width="2.68" stroke-linecap="round" stroke-linejoin="round"/></g>
<g transform="translate(841 622.5)"><circle r="22.5" fill="#1db979" fill-opacity="0.23"/><circle r="15.2" fill="#fff" fill-opacity=".55"/><circle r="14" fill="#1db979"/><path d="M-5.82 0.86L-1.72 4.63L6.03 -3.55" fill="none" stroke="#fff" stroke-width="2.58" stroke-linecap="round" stroke-linejoin="round"/></g>
<g transform="translate(906.5 819)"><circle r="20.5" fill="#1db979" fill-opacity="0.23"/><circle r="14.0" fill="#fff" fill-opacity=".55"/><circle r="12.8" fill="#1db979"/><path d="M-5.32 0.79L-1.58 4.23L5.51 -3.25" fill="none" stroke="#fff" stroke-width="2.36" stroke-linecap="round" stroke-linejoin="round"/></g>
<g transform="translate(1507 408.5)"><circle r="22.3" fill="#efb70f" fill-opacity="0.26"/><circle r="15.7" fill="#fff" fill-opacity=".55"/><circle r="14.5" fill="#efb70f"/><path d="M0 -6.69V2.01" stroke="#fff" stroke-width="3.35" stroke-linecap="round"/><circle cy="7.14" r="1.95" fill="#fff"/></g>
<g transform="translate(1010 739)"><circle r="22.3" fill="#efb70f" fill-opacity="0.26"/><circle r="16.0" fill="#fff" fill-opacity=".55"/><circle r="14.8" fill="#efb70f"/><path d="M0 -6.83V2.05" stroke="#fff" stroke-width="3.42" stroke-linecap="round"/><circle cy="7.29" r="1.99" fill="#fff"/></g>
<circle cx="1334" cy="426" r="67.5" fill="#ea1a45" fill-opacity=".085"/><circle cx="1334" cy="426" r="44" fill="#ea1a45" fill-opacity=".13"/>
<circle cx="990.5" cy="509" r="30" fill="#fb7c06" fill-opacity=".24"/>
<circle cx="1050" cy="623" r="38.5" fill="#fb7c06" fill-opacity=".24"/>
<circle cx="1198" cy="574.5" r="21.6" fill="#fb7c06" fill-opacity=".24"/>
<path d="M1334 426L990.5 509" stroke="#e00b36" stroke-width="2.9" fill="none"/><path d="M8 0L-7 -7.5L-7 7.5Z" fill="#ea1a45" transform="translate(1165.7 466.7) rotate(166.4)"/>
<path d="M1334 426L1050 623" stroke="#e00b36" stroke-width="2.9" fill="none"/><path d="M8 0L-7 -7.5L-7 7.5Z" fill="#ea1a45" transform="translate(1197.7 520.6) rotate(145.3)"/>
<path d="M1334 426L1198 574.5" stroke="#e00b36" stroke-width="2.9" fill="none"/><path d="M8 0L-7 -7.5L-7 7.5Z" fill="#ea1a45" transform="translate(1261.9 504.7) rotate(132.5)"/>
<g transform="translate(990.5 509)"><circle r="17.5" fill="#fb7c06"/><path d="M0 -8.08V2.42" stroke="#fff" stroke-width="4.04" stroke-linecap="round"/><circle cy="8.62" r="2.36" fill="#fff"/></g>
<g transform="translate(1050 623)"><circle r="22.5" fill="#fb7c06"/><path d="M0 -10.38V3.12" stroke="#fff" stroke-width="5.19" stroke-linecap="round"/><circle cy="11.08" r="3.03" fill="#fff"/></g>
<g transform="translate(1198 574.5)"><circle r="12.6" fill="#fb7c06"/><path d="M0 -5.82V1.74" stroke="#fff" stroke-width="2.91" stroke-linecap="round"/><circle cy="6.20" r="1.70" fill="#fff"/></g>
<g transform="translate(1334 426)"><circle r="26.2" fill="#fff" fill-opacity=".6"/><circle r="25" fill="#ea1a45"/><path d="M0 -13.85L13.85 9.42H-13.85Z" fill="#fff" stroke="#fff" stroke-width="4.23" stroke-linejoin="round"/><path d="M0 -6.92V2.31" stroke="#ea1a45" stroke-width="3.27" stroke-linecap="round"/><circle cy="7.12" r="2.02" fill="#ea1a45"/></g>
</svg>
<div class="tint"></div>
<div class="tipsh"></div>
</div>
<div class="abs legend">
<svg class="i" style="top:19.5px" viewBox="-13 -13 26 26"><circle r="13" fill="#1db979"/><path d="M-5.40 0.80L-1.60 4.30L5.60 -3.30" fill="none" stroke="#fff" stroke-width="2.40" stroke-linecap="round" stroke-linejoin="round"/></svg>
<div class="x" style="top:20.5px">Optimal stock</div>
<svg class="i" style="top:62.0px" viewBox="-13 -13 26 26"><circle r="13" fill="#efb70f"/><path d="M0 -6.00V1.80" stroke="#fff" stroke-width="3.00" stroke-linecap="round"/><circle cy="6.40" r="1.75" fill="#fff"/></svg>
<div class="x" style="top:63.0px">Overstock</div>
<svg class="i" style="top:104.5px" viewBox="-13 -13 26 26"><circle r="13" fill="#fb7c06"/><path d="M0 -6.00V1.80" stroke="#fff" stroke-width="3.00" stroke-linecap="round"/><circle cy="6.40" r="1.75" fill="#fff"/></svg>
<div class="x" style="top:105.5px">Low stock</div>
<svg class="i" style="top:147.0px" viewBox="-13 -13 26 26"><circle r="13" fill="#ea1a45"/><path d="M0 -7.20L7.20 4.90H-7.20Z" fill="#fff" stroke="#fff" stroke-width="2.20" stroke-linejoin="round"/><path d="M0 -3.60V1.20" stroke="#ea1a45" stroke-width="1.70" stroke-linecap="round"/><circle cy="3.70" r="1.05" fill="#ea1a45"/></svg>
<div class="x" style="top:148.0px;letter-spacing:.18px">Expiring soon</div>
</div>
<div class="abs tiparrow"></div>
<div class="abs tip">
<div class="ic"><svg width="56" height="56" viewBox="-28 -28 56 56"><path d="M0 -15.6C1.2 -5.6 5.6 -1.2 15.6 0C5.6 1.2 1.2 5.6 0 15.6C-1.2 5.6 -5.6 1.2 -15.6 0C-5.6 -1.2 -1.2 -5.6 0 -15.6Z" fill="#ee1fa2" transform="translate(-.8,.3)"/><path d="M0 -3.6C.8 -1.6 1.6 -.8 3.6 0C1.6 .8 .8 1.6 0 3.6C-.8 1.6 -1.6 .8 -3.6 0C-1.6 -.8 -.8 -1.6 0 -3.6Z" fill="#ee1fa2" transform="translate(15,-10.6)"/><path d="M0 -3.6C.8 -1.6 1.6 -.8 3.6 0C1.6 .8 .8 1.6 0 3.6C-.8 1.6 -1.6 .8 -3.6 0C-1.6 -.8 -.8 -1.6 0 -3.6Z" fill="#ee1fa2" transform="translate(-10.5,14.6) scale(.92)"/></svg></div>
<div class="tx">Supply of craft beers in the<br>Water St. location is at risk of<br>expiration. Rebalance to nearby<br>locations with high demand and<br>critical stock levels.</div>
</div>
<svg class="abs close" viewBox="-25.5 -25.5 51 51"><circle r="24" fill="#fff" fill-opacity=".5" stroke="#0a0a22" stroke-width="2.4"/><path d="M-11.6 -11.4L11.6 11.4M11.6 -11.4L-11.6 11.4" stroke="#0a0a22" stroke-width="2.8" stroke-linecap="round"/></svg>
</body></html>
